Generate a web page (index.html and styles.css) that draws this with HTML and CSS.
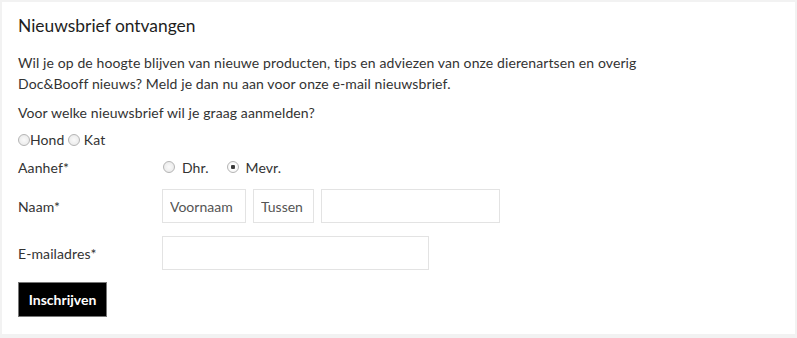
FILE: index.html
```html
<!DOCTYPE html>
<html lang="nl">
<head>
  <meta charset="UTF-8" />
  <meta name="viewport" content="width=device-width, initial-scale=1.0" />
  <title>Nieuwsbrief ontvangen</title>
  <link rel="stylesheet" href="styles.css">
</head>
<body>
  <section class="newsletter">
    <h2>Nieuwsbrief ontvangen</h2>
    <p class="intro">Wil je op de hoogte blijven van nieuwe producten, tips en adviezen van onze dierenartsen en overig<br>Doc&amp;Booff nieuws? Meld je dan nu aan voor onze e-mail nieuwsbrief.</p>
    <p class="question">Voor welke nieuwsbrief wil je graag aanmelden?</p>
    <div class="choice"><input type="radio" name="soort" value="hond">Hond <input type="radio" name="soort" value="kat"> Kat</div>

    <form class="form" onsubmit="return false">
      <div class="row row-aanhef">
        <label class="label">Aanhef*</label>
        <div class="radios">
          <label class="radio-option"><input type="radio" name="aanhef" value="dhr">Dhr.</label>
          <label class="radio-option"><input type="radio" name="aanhef" value="mevr" checked>Mevr.</label>
        </div>
      </div>
      <div class="row row-naam">
        <label class="label">Naam*</label>
        <div class="fields">
          <input type="text" class="input input-first" placeholder="Voornaam">
          <input type="text" class="input input-middle" placeholder="Tussen">
          <input type="text" class="input input-last">
        </div>
      </div>
      <div class="row">
        <label class="label">E-mailadres*</label>
        <input type="email" class="input input-email">
      </div>
      <button type="submit" class="submit">Inschrijven</button>
    </form>
  </section>
</body>
</html>
```

FILE: styles.css
```css
body {
  margin: 0;
  padding: 2px 2px 4px 2px;
  background-color: #f2f2f2;
  font-family: Lato, "Open Sans", Arial, sans-serif;
  font-size: 14px;
  line-height: 21px;
  letter-spacing: 0.1px;
  color: #333;
}

.newsletter {
  background-color: #fff;
  padding: 13px 16px 17px 16px;
}

h2 {
  margin: 0 0 15px 0;
  font-size: 17.4px;
  line-height: 22px;
  font-weight: normal;
  letter-spacing: 0;
  color: #1e1e1e;
}

.intro {
  margin: 0 0 8px 0;
}

.question {
  margin: 0 0 6px 0;
}

.choice {
  margin: 0 0 7px 0;
}

input[type="radio"] {
  -webkit-appearance: none;
  appearance: none;
  width: 12px;
  height: 12px;
  margin: 0;
  border: 1px solid #b5b5b5;
  border-radius: 50%;
  background: radial-gradient(circle, #fafafa 0%, #e6e6e6 100%);
  vertical-align: -1px;
  box-sizing: border-box;
}
input[type="radio"]:checked {
  background: radial-gradient(circle, #333 0, #444 2px, #fff 2.5px, #f0f0f0 100%);
}

.form {
  margin: 0;
}

.row {
  display: flex;
  align-items: center;
  margin-top: 13px;
}
.row-aanhef {
  margin-top: 0;
}
.row-naam {
  margin-top: 11px;
}

.label {
  width: 144px;
  flex-shrink: 0;
}

.radios {
  display: flex;
  gap: 18px;
  padding-left: 1px;
}
.radio-option {
  display: flex;
  align-items: center;
  gap: 7px;
}
.radio-option input {
  margin-top: -2px;
}

.fields {
  display: flex;
  gap: 7px;
}

.input {
  box-sizing: border-box;
  height: 34px;
  border: 1px solid #e3e3e3;
  padding: 0 7px;
  margin: 0;
  font-family: Lato, "Open Sans", Arial, sans-serif;
  font-size: 14px;
  color: #333;
  background-color: #fff;
  outline: none;
}
.input::placeholder {
  color: #555;
}
.input-first { width: 84px; }
.input-middle { width: 61px; }
.input-last { width: 179px; }
.input-email { width: 267px; }

.submit {
  margin-top: 12px;
  height: 35px;
  width: 89px;
  padding: 0;
  background-color: #000;
  color: #fff;
  border: 1px solid #777;
  font-family: Lato, "Open Sans", Arial, sans-serif;
  font-size: 14px;
  font-weight: bold;
  cursor: pointer;
}
```
